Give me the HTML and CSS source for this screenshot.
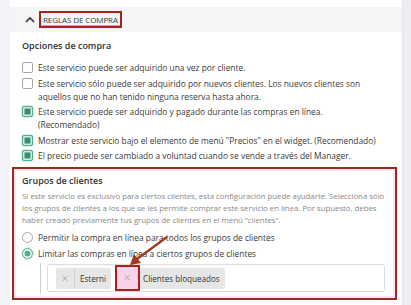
FILE: index.html
```html
<!DOCTYPE html>
<html lang="es">
<head>
    <meta charset="UTF-8">
    <title>Reglas de compra</title>
    <link rel="stylesheet" href="styles.css">
</head>
<body>
    <div class="page">
        <div class="side-left"></div>

        <main class="panel">
            <!-- Section header -->
            <div class="section-head">
                <svg class="chevron" width="10" height="7" viewBox="0 0 10 7">
                    <path d="M1 6 L5 2 L9 6" fill="none" stroke="#333" stroke-width="1.6"/>
                </svg>
                <span class="head-title">REGLAS DE COMPRA</span>
            </div>

            <div class="content">
                <h2 class="group-title">Opciones de compra</h2>

                <div class="option">
                    <span class="check"></span>
                    <span class="label">Este servicio puede ser adquirido una vez por cliente.</span>
                </div>
                <div class="option">
                    <span class="check"></span>
                    <span class="label">Este servicio sólo puede ser adquirido por nuevos clientes. Los nuevos clientes son aquellos que no han tenido ninguna reserva hasta ahora.</span>
                </div>
                <div class="option">
                    <span class="check checked"></span>
                    <span class="label">Este servicio puede ser adquirido y pagado durante las compras en línea. (Recomendado)</span>
                </div>
                <div class="option">
                    <span class="check checked"></span>
                    <span class="label">Mostrar este servicio bajo el elemento de menú "Precios" en el widget. (Recomendado)</span>
                </div>
                <div class="option">
                    <span class="check checked"></span>
                    <span class="label">El precio puede ser cambiado a voluntad cuando se vende a través del Manager.</span>
                </div>
            </div>

            <!-- Highlighted customer groups block -->
            <div class="groups">
                <h2 class="group-title">Grupos de clientes</h2>
                <p class="hint">Si este servicio es exclusivo para ciertos clientes, esta configuración puede ayudarte. Selecciona sólo los grupos de clientes a los que se les permite comprar este servicio en línea. Por supuesto, debes haber creado previamente tus grupos de clientes en el menú "clientes".</p>

                <div class="option radio-row">
                    <span class="radio"></span>
                    <span class="label">Permitir la compra en línea para todos los grupos de clientes</span>
                </div>
                <div class="option radio-row">
                    <span class="radio selected"></span>
                    <span class="label">Limitar las compras en línea a ciertos grupos de clientes</span>
                </div>

                <div class="tag-wrap">
                    <div class="tag-input">
                        <span class="tag"><span class="tag-x">×</span><span class="tag-name">Esterni</span></span>
                        <span class="tag"><span class="tag-x marked">×</span><span class="tag-name">Clientes bloqueados</span></span>
                    </div>
                </div>

                <svg class="arrow" width="50" height="34" viewBox="0 0 50 34">
                    <line x1="43" y1="2" x2="13" y2="24" stroke="#a23a1c" stroke-width="2.2"/>
                    <path d="M6 30 L10 19 L17 28 Z" fill="#a23a1c"/>
                </svg>
            </div>
        </main>

        <div class="side-right"></div>
    </div>
</body>
</html>
```

FILE: styles.css
```css
html, body {
    margin: 0;
    height: 100%;
}

body {
    font-family: "Open Sans", "Noto Sans", sans-serif;
    color: #3a3a3a;
    background-color: #f3f4f8;
}

.page {
    display: flex;
    min-height: 305px;
}

.side-left {
    width: 10px;
    background-color: #f3f4f8;
}

.side-right {
    width: 8px;
    background-color: #eceef4;
    border-left: 1px solid #e3e5eb;
}

.panel {
    flex: 1;
    background-color: #fff;
    padding-top: 7px;
    position: relative;
}

.section-head {
    height: 25px;
    background-color: #f5f5f5;
    display: flex;
    align-items: center;
    padding-left: 15px;
}

.chevron {
    margin-right: 4px;
}

.head-title {
    font-size: 8px;
    color: #2a4238;
    letter-spacing: -0.1px;
    border: 2px solid #a8231c;
    padding: 2px 2px;
    line-height: 9px;
    box-shadow: inset 0 -6px 0 -5px #f08ad0;
}

.content {
    padding: 8px 20px 0 12px;
}

.group-title {
    font-size: 9px;
    font-weight: 600;
    margin: 0 0 9px;
    color: #333;
    line-height: 12px;
}

.option {
    display: flex;
    align-items: flex-start;
    font-size: 8.4px;
    line-height: 13px;
    margin-bottom: 2.5px;
}

.option .label {
    flex: 1;
}

.check {
    flex: none;
    width: 9px;
    height: 9px;
    border: 1px solid #a7a7a7;
    border-radius: 2px;
    margin: 1px 5px 0 0;
    background-color: #fff;
}

.check.checked {
    border-color: #53b08d;
    background-color: #53b08d;
    box-shadow: inset 0 0 0 1.5px #cfeee2, inset 0 0 0 5px #3f8a6e, 0 0 0 1px #d4f4ea;
}

.groups {
    position: relative;
    margin: 5px 5px 7px 2px;
    border: 2px solid #9a2a1c;
    box-shadow: inset 0 0 0 2px #fbe3f4;
    padding: 6px 10px 4px 8px;
}

.groups .group-title {
    margin-bottom: 3px;
}

.hint {
    font-size: 7.9px;
    line-height: 12px;
    color: #8a8a8a;
    margin: 0 0 5px;
    letter-spacing: -0.05px;
}

.radio-row {
    margin-bottom: 3px;
}

.radio {
    flex: none;
    width: 9px;
    height: 9px;
    border: 1px solid #a7a7a7;
    border-radius: 50%;
    margin: 1px 5px 0 0;
}

.radio.selected {
    border-color: #53b08d;
    box-shadow: inset 0 0 0 1.5px #fff, inset 0 0 0 5px #53b08d, 0 0 0 1px #d4f4ea;
}

.tag-wrap {
    margin-left: 18px;
    padding: 1px 0 2px 6px;
    border-left: 1px solid #cfcfcf;
}

.tag-input {
    border: 1px solid #dcdcdc;
    border-radius: 3px;
    padding: 0 8px;
    display: flex;
    gap: 6px;
    height: 26px;
    align-items: center;
}

.tag {
    display: flex;
    background-color: #e6e6e6;
    border-radius: 2px;
    font-size: 8.1px;
    line-height: 21px;
    height: 21px;
}

.tag-x {
    color: #999;
    width: 18px;
    text-align: center;
    border-right: 1px solid #d2d2d2;
    font-size: 12px;
    font-weight: 300;
}

.tag-x.marked {
    width: 20px;
    background-color: #f7d3ec;
    outline: 2px solid #a8231c;
    height: 22px;
    margin-top: -1px;
    line-height: 22px;
}

.tag-name {
    padding: 0 5px;
    color: #333;
}

.arrow {
    position: absolute;
    left: 110px;
    top: 66px;
}
```
